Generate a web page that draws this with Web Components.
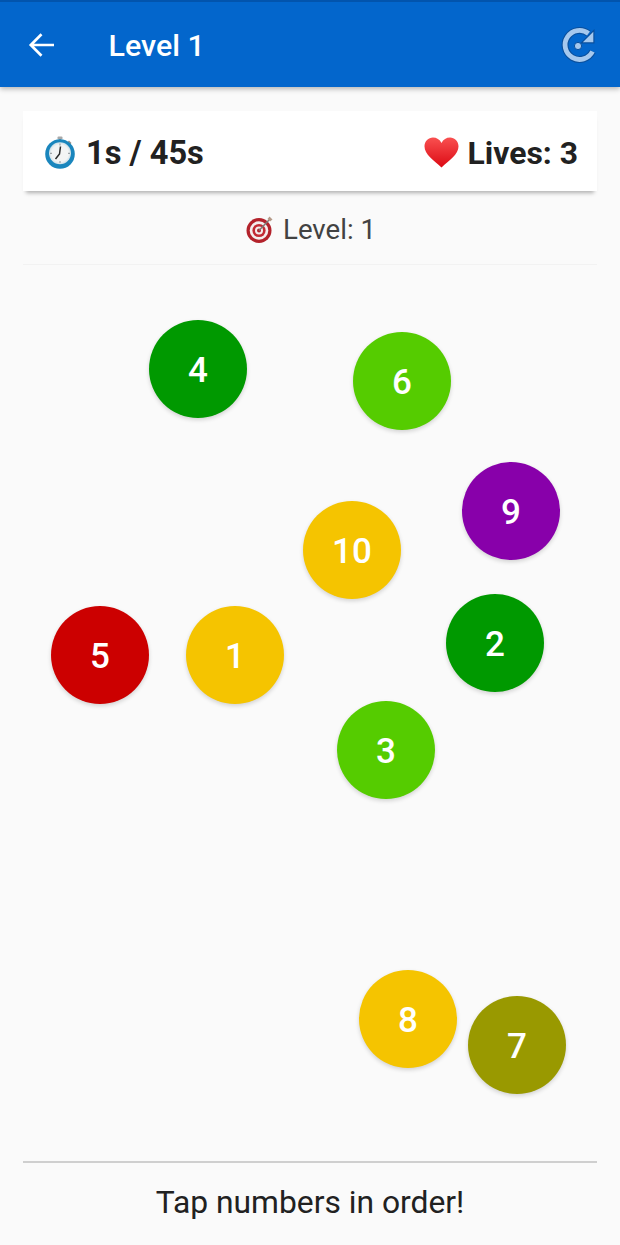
<!DOCTYPE html>
<html lang="en">
<head>
<meta charset="utf-8">
<title>Level 1</title>
<style>
  html, body { margin: 0; height: 100%; background: #fafafa; }
  body { font-family: Roboto, "Liberation Sans", sans-serif; }
</style>
</head>
<body>
<game-screen></game-screen>

<script>
class AppHeader extends HTMLElement {
  constructor() {
    super();
    this.attachShadow({ mode: "open" });
  }

  connectedCallback() {
    this.shadowRoot.innerHTML = `
      <style>
        :host {
          display: flex;
          align-items: center;
          box-sizing: border-box;
          height: 87px;
          padding: 1px 22px 0 28px;
          background: #0366cc;
          border-top: 2px solid #0254ad;
          box-shadow: 0 2px 5px rgba(0, 0, 0, 0.28);
          color: #fff;
          position: relative;
          z-index: 2;
        }
        .back { width: 28px; height: 28px; flex: none; }
        .title {
          flex: 1;
          margin-left: 52.500px;
          font-size: 30.400px;
          font-weight: 500;
        }
        .reload { width: 38px; height: 38px; flex: none; }
      </style>
      <svg class="back" viewBox="0 0 28 28" fill="none" stroke="#fff" stroke-width="2.7">
        <path d="M26 14H3M13.5 3.2 2.8 14l10.7 10.8"/>
      </svg>
      <div class="title">${this.getAttribute("title") || ""}</div>
      <svg class="reload" viewBox="0 0 38 38">
        <path d="M32.500 25.500A14.500 14.500 0 1 1 28.500 7.500" fill="none" stroke="#0a4f9c" stroke-width="7"/>
        <path d="M34.500 3v14.500H20z" fill="#0a4f9c"/>
        <path d="M32.500 25.500A14.500 14.500 0 1 1 28.500 7.500" fill="none" stroke="#a5c8ee" stroke-width="4.800"/>
        <path d="M33.300 5.800v10.500H22.800z" fill="#a5c8ee"/>
        <circle cx="18" cy="20" r="3.600" fill="#a5c8ee" stroke="#0a4f9c" stroke-width="1"/>
      </svg>
    `;
  }
}

class StatusCard extends HTMLElement {
  constructor() {
    super();
    this.attachShadow({ mode: "open" });
  }

  connectedCallback() {
    this.shadowRoot.innerHTML = `
      <style>
        :host {
          display: flex;
          justify-content: space-between;
          align-items: center;
          height: 80px;
          padding: 3px 19px 0 21px;
          box-sizing: border-box;
          background: #fff;
          box-shadow: 0 5px 4px -3px rgba(0, 0, 0, 0.3);
          color: #212121;
          font-size: 32.600px;
          font-weight: 700;
        }
        .item { display: flex; align-items: center; gap: 10px; }
        .item.lives { gap: 9px; font-size: 31.900px; }
        svg { display: block; flex: none; margin-top: -1px; }
      </style>
      <div class="item">
        <svg width="32" height="33" viewBox="0 0 32 33">
          <defs>
            <radialGradient id="face" cx="0.5" cy="0.5" r="0.55">
              <stop offset="0.7" stop-color="#f3f4f4"/>
              <stop offset="1" stop-color="#bcd6e2"/>
            </radialGradient>
          </defs>
          <rect x="13.500" y="0.500" width="5" height="3" rx="1" fill="#a9a9a9"/>
          <rect x="15" y="3" width="2" height="3" fill="#8f8f8f"/>
          <path d="M25 4.500l2.500 2.500-1.500 1.500-2.500-2.500z" fill="#9a8f86"/>
          <circle cx="16" cy="18" r="14.800" fill="#1a86bd"/>
          <circle cx="16" cy="17.300" r="11" fill="url(#face)"/>
          <path d="M16 7.500v2M16 25v2M6 17.300h2M24 17.300h2" stroke="#8b9296" stroke-width="1"/>
          <path d="M16.500 10.500 15.500 18 11.500 23" fill="none" stroke="#2b2b2b" stroke-width="1.500"/>
        </svg>
        <span>${this.getAttribute("time") || ""}</span>
      </div>
      <div class="item lives">
        <svg width="35" height="31" viewBox="0 0 36 31" preserveAspectRatio="none">
          <defs>
            <linearGradient id="heart" x1="0" y1="0" x2="0" y2="1">
              <stop offset="0" stop-color="#f95050"/>
              <stop offset="1" stop-color="#dc0a14"/>
            </linearGradient>
          </defs>
          <path d="M18 30.500C10 23.500 0.500 17.500 0.500 9.300 0.500 4 4.600 0.500 9.200 0.500c3.800 0 7 1.900 8.800 5.400C19.800 2.400 23 0.500 26.800 0.500c4.600 0 8.700 3.500 8.700 8.800C35.500 17.500 26 23.500 18 30.500z" fill="url(#heart)"/>
        </svg>
        <span>Lives: ${this.getAttribute("lives") || ""}</span>
      </div>
    `;
  }
}

class LevelLabel extends HTMLElement {
  constructor() {
    super();
    this.attachShadow({ mode: "open" });
  }

  connectedCallback() {
    this.shadowRoot.innerHTML = `
      <style>
        :host {
          display: flex;
          justify-content: center;
          align-items: center;
          gap: 10px;
          height: 74px;
          box-sizing: border-box;
          padding: 3px 0 0 2px;
          border-bottom: 1px solid #f2f2f2;
          color: #424242;
          font-size: 27.600px;
        }
        svg { display: block; flex: none; }
      </style>
      <svg width="27" height="27" viewBox="0 0 27 27">
        <circle cx="13" cy="14.500" r="12.500" fill="#b3222b"/>
        <circle cx="13" cy="14.500" r="9.300" fill="#f4eeee"/>
        <circle cx="13" cy="14.500" r="6.600" fill="#c32a33"/>
        <circle cx="13" cy="14.500" r="4" fill="#f4eeee"/>
        <circle cx="13" cy="14.500" r="2" fill="#b3222b"/>
        <path d="M13 14.500 23 4" stroke="#7d7a76" stroke-width="1.500"/>
        <path d="M21.500 3 23.500 0.500 26.500 3.500 24 5.500z" fill="#b59a88"/>
      </svg>
      <span>Level: ${this.getAttribute("level") || ""}</span>
    `;
  }
}

// one tappable number; its place in the field comes from the x/y attributes (centre point)
class NumberBubble extends HTMLElement {
  constructor() {
    super();
    this.attachShadow({ mode: "open" });
  }

  connectedCallback() {
    this.style.left = this.getAttribute("x") - 49 + "px";
    this.style.top = this.getAttribute("y") - 49 + "px";
    this.style.background = this.getAttribute("color");
    this.shadowRoot.innerHTML = `
      <style>
        :host {
          position: absolute;
          display: flex;
          justify-content: center;
          align-items: center;
          width: 98px;
          height: 98px;
          padding-top: 3px;
          box-sizing: border-box;
          border-radius: 50%;
          box-shadow: 0 2px 4px rgba(0, 0, 0, 0.16);
          color: #fff;
          font-size: 35px;
          font-weight: 500;
        }
      </style>
      <slot></slot>
    `;
  }
}

class GameScreen extends HTMLElement {
  constructor() {
    super();
    this.attachShadow({ mode: "open" });
  }

  connectedCallback() {
    const bubbles = [
      [4, 198, 369, "#009900"],
      [6, 402, 381, "#55cc00"],
      [9, 511, 511, "#8800aa"],
      [10, 352, 550, "#f5c400"],
      [5, 100, 655, "#cc0000"],
      [1, 235, 655, "#f5c400"],
      [2, 495, 643, "#009900"],
      [3, 386, 750, "#55cc00"],
      [8, 408, 1019, "#f5c400"],
      [7, 517, 1045, "#999900"],
    ];

    this.shadowRoot.innerHTML = `
      <style>
        :host {
          display: flex;
          flex-direction: column;
          height: 1245px;
          background: #fafafa;
          position: relative;
        }
        .content {
          flex: 1;
          display: flex;
          flex-direction: column;
          padding: 24px 23px 0;
        }
        .spacer { flex: 1; }
        .field { position: absolute; inset: 0; }
        .hint {
          height: 84px;
          box-sizing: border-box;
          padding-bottom: 5px;
          display: flex;
          justify-content: center;
          align-items: center;
          border-top: 2px solid #cfcfcf;
          color: #212121;
          font-size: 31.800px;
        }
      </style>
      <app-header title="Level 1"></app-header>
      <div class="content">
        <status-card time="1s / 45s" lives="3"></status-card>
        <level-label level="1"></level-label>
        <div class="spacer"></div>
        <div class="hint">Tap numbers in order!</div>
      </div>
      <div class="field">
        ${bubbles
          .map(
            ([n, x, y, color]) =>
              `<number-bubble x="${x}" y="${y}" color="${color}">${n}</number-bubble>`,
          )
          .join("")}
      </div>
    `;
  }
}

customElements.define("app-header", AppHeader);
customElements.define("status-card", StatusCard);
customElements.define("level-label", LevelLabel);
customElements.define("number-bubble", NumberBubble);
customElements.define("game-screen", GameScreen);
</script>
</body>
</html>
